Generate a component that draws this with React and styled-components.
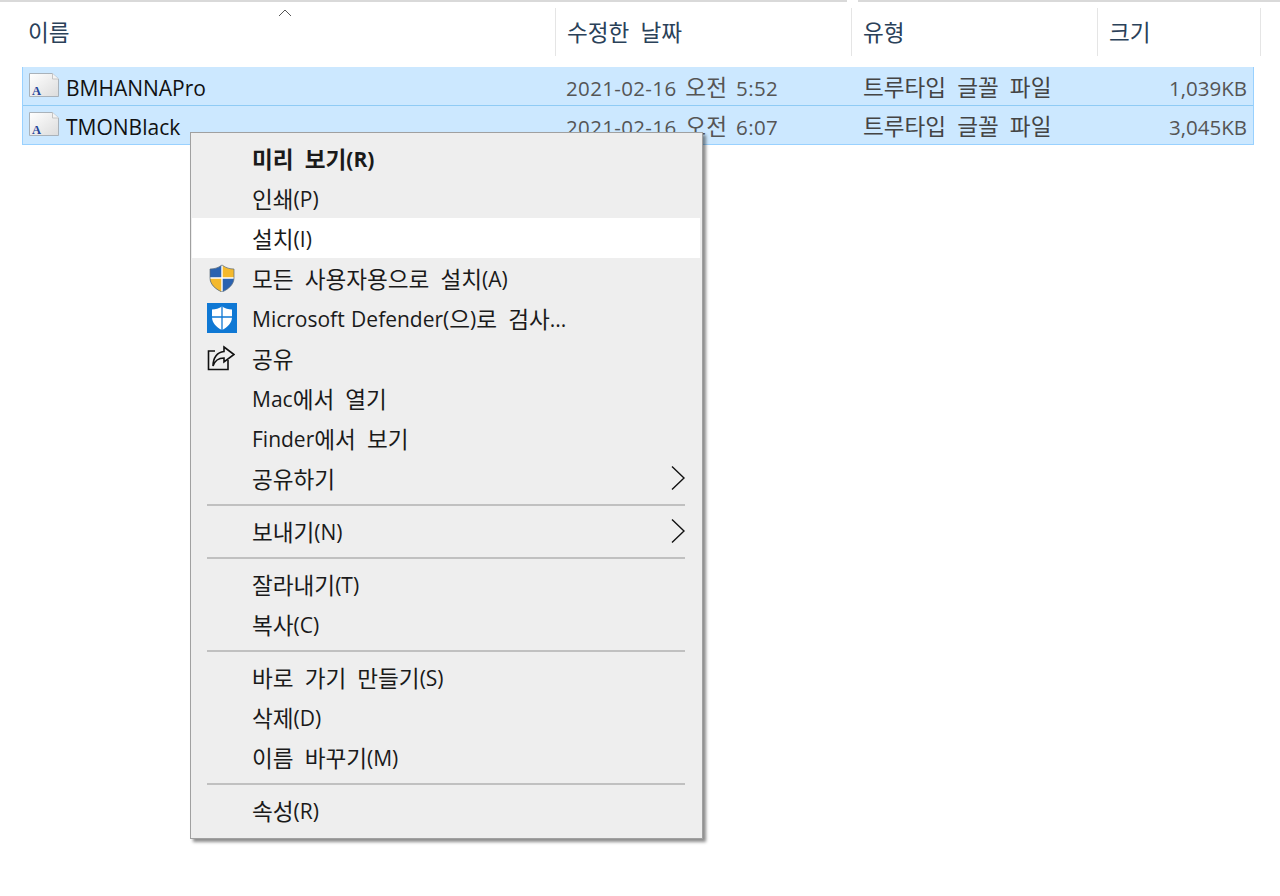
import React from 'react';
import styled, { createGlobalStyle } from 'styled-components';

const Global = createGlobalStyle`
  html, body { margin: 0; padding: 0; background: #fff; }
  body { font-family: "Open Sans", "Noto Sans CJK KR", sans-serif; word-spacing: 3px; }
`;
const Page = styled.div`
  position: relative; width: 1280px; height: 896px; overflow: hidden; background: #fff;
`;
const TopRule = styled.div`
  display: flex; height: 2px; background: #d9d9d9;
  & > i { display: block; width: 11px; margin-left: 847px; background: #fff; }
`;
const Header = styled.div`
  display: grid; grid-template-columns: 555px 296px 246px 164px; height: 48px; margin-top: 6px;
`;
const Cell = styled.div`
  position: relative; display: flex; align-items: center; padding: 0 0 0 ${p => p.$pad}px; font-size: 20.5px; color: #2a4159;
  border-left: ${p => (p.$line ? '1px solid #e5e5e5' : 'none')};
  border-right: ${p => (p.$end ? '1px solid #e5e5e5' : 'none')};
`;
const Sort = styled.svg`
  position: absolute; left: 278px; top: 1px; width: 14px; height: 8px;
`;
const Rows = styled.div`
  margin: 11px 26px 0 22px; border: 1px solid #99d1ff; border-top: none; background: #cce8ff;
`;
const Row = styled.div`
  display: grid; grid-template-columns: 543px 297px 246px 1fr; height: 38px; align-items: center;
  border-top: ${p => (p.$first ? 'none' : '1px solid #8fcbf5')};
`;
const NameCol = styled.div`
  display: flex; align-items: center; gap: 7px; padding: 3px 0 0 6px; font-size: 21px; color: #111;
`;
const FileIcon = styled.svg`
  margin-top: -6px; flex: none;
`;
const Col = styled.div`
  padding-top: 3px; font-size: 20.5px; color: ${p => p.$c || '#555'}; text-align: ${p => p.$right ? 'right' : 'left'};
  padding-right: ${p => p.$right ? 6 : 0}px; letter-spacing: ${p => p.$s || 0}px;
`;
const Menu = styled.div`
  position: absolute; left: 190px; top: 132px; width: 513px; box-sizing: border-box; padding: 5px 2px 8px 1px;
  background: #eeeeee; border: 1px solid #a0a0a0; box-shadow: 3px 3px 3px rgba(0,0,0,.45);
`;
const Item = styled.div`
  position: relative; height: 40px; box-sizing: border-box; padding: 2px 0 0 60px; display: flex; align-items: center;
  font-size: 21px; color: #1a1a1a; word-spacing: 1px;
  font-weight: ${p => p.$bold ? 700 : 400}; background: ${p => p.$hot ? '#fff' : 'transparent'}; white-space: pre;
`;
const ItemIcon = styled.svg`
  position: absolute; left: 15px; top: 50%; transform: translateY(-50%);
`;
const ShieldIcon = styled(ItemIcon)`
  left: 16px;
`;
const Arrow = styled.svg`
  position: absolute; right: 14px; top: 50%; transform: translateY(-50%); width: 16px; height: 26px;
`;
const Sep = styled.div`
  height: 2px; margin: 6px 15px 5px 15px; background: #c0c0c0;
`;
const Han = styled.span`
  font-family: "Noto Sans CJK KR", sans-serif; font-size: 22.6px; line-height: 1; word-spacing: 6px;
`;

const T = ({ children }) => {
  const parts = String(children).split(/([\uAC00-\uD7A3]+(?: +[\uAC00-\uD7A3]+)*)/);
  return <>{parts.map((p, i) => (i % 2 ? <Han key={i}>{p}</Han> : p))}</>;
};

const FontIcon = () => (
  <FileIcon width="30" height="24" viewBox="0 0 30 24">
    <defs>
      <linearGradient id="fg" x1="0" y1="0" x2="1" y2="1">
        <stop offset="0" stopColor="#ffffff" /><stop offset="1" stopColor="#dcdcdc" />
      </linearGradient>
    </defs>
    <path d="M.5 .5H23.5L29.5 6V23.5H.5Z" fill="url(#fg)" stroke="#a9b2ba" />
    <path d="M23.5 .5V6H29.5" fill="#f4f4f4" stroke="#c4c4c4" />
    <text x="3" y="21.5" fontFamily="Liberation Serif, serif" fontWeight="700" fontSize="12.5" fill="#24459a">A</text>
  </FileIcon>
);
const Shield = () => (
  <ShieldIcon width="28" height="28" viewBox="0 0 28 28">
    <path d="M14 1C10 4 6 5 2 5V14C2 20 7 25 14 28Z" fill="#2a62b0" />
    <path d="M14 1C18 4 22 5 26 5V14H14Z" fill="#f4b92d" />
    <path d="M14 14H26C26 20 21 25 14 28Z" fill="#2a62b0" />
    <path d="M2 14H14V28C7 25 2 20 2 14Z" fill="#f4b92d" />
    <path d="M14 1V28M2 14H26" stroke="#fff" strokeWidth="1.4" />
    <path d="M14 1C10 4 6 5 2 5V14C2 20 7 25 14 28C21 25 26 20 26 14V5C22 5 18 4 14 1Z" fill="none" stroke="#5a6a78" strokeWidth=".7" />
  </ShieldIcon>
);
const Defender = () => (
  <ItemIcon width="30" height="30" viewBox="0 0 30 30">
    <rect width="30" height="30" fill="#0f78d4" />
    <path d="M15 3.5C12 5.5 8.5 6.5 5 6.5V14C5 20 9.5 24.5 15 27C20.5 24.5 25 20 25 14V6.5C21.5 6.5 18 5.5 15 3.5Z" fill="#fff" />
    <path d="M15 3.5V27M5 14H25" stroke="#0f78d4" strokeWidth="1.3" />
  </ItemIcon>
);
const Share = () => (
  <ItemIcon width="28" height="26" viewBox="0 0 28 26" fill="none" stroke="#111" strokeWidth="1.6">
    <path d="M8 6H1.5V24.5H21V15" />
    <path d="M17 2L27 9.5L17 17V13C12 13 8 15 6 21C6 13 10 7 17 6.5Z" />
  </ItemIcon>
);
const Chev = () => (
  <Arrow viewBox="0 0 16 26" fill="none" stroke="#111" strokeWidth="1.4"><path d="M2 1.5L14 13L2 24.5" /></Arrow>
);

const files = [
  { name: 'BMHANNAPro', date: '2021-02-16 오전 5:52', size: '1,039KB' },
  { name: 'TMONBlack', date: '2021-02-16 오전 6:07', size: '3,045KB' },
];

export default function App() {
  return (
    <Page>
      <Global />
      <TopRule><i /></TopRule>
      <Header>
        <Cell $pad={28}><T>이름</T><Sort viewBox="0 0 14 8" fill="none" stroke="#555" strokeWidth="1"><path d="M1 7L7 1L13 7" /></Sort></Cell>
        <Cell $pad={11} $line><T>수정한 날짜</T></Cell>
        <Cell $pad={11} $line><T>유형</T></Cell>
        <Cell $pad={11} $line $end><T>크기</T></Cell>
      </Header>
      <Rows>
        {files.map((f, i) => (
          <Row key={f.name} $first={i === 0}>
            <NameCol><FontIcon />{f.name}</NameCol>
            <Col $s={0.35}><T>{f.date}</T></Col>
            <Col $c="#444"><T>트루타입 글꼴 파일</T></Col>
            <Col $right>{f.size}</Col>
          </Row>
        ))}
      </Rows>
      <Menu>
        <Item $bold><T>미리 보기(R)</T></Item>
        <Item><T>인쇄(P)</T></Item>
        <Item $hot><T>설치(I)</T></Item>
        <Item><Shield /><T>모든 사용자용으로 설치(A)</T></Item>
        <Item><Defender /><T>Microsoft Defender(으)로 검사...</T></Item>
        <Item><Share /><T>공유</T></Item>
        <Item><T>Mac에서 열기</T></Item>
        <Item><T>Finder에서 보기</T></Item>
        <Item><T>공유하기</T><Chev /></Item>
        <Sep />
        <Item><T>보내기(N)</T><Chev /></Item>
        <Sep />
        <Item><T>잘라내기(T)</T></Item>
        <Item><T>복사(C)</T></Item>
        <Sep />
        <Item><T>바로 가기 만들기(S)</T></Item>
        <Item><T>삭제(D)</T></Item>
        <Item><T>이름 바꾸기(M)</T></Item>
        <Sep />
        <Item><T>속성(R)</T></Item>
      </Menu>
    </Page>
  );
}
